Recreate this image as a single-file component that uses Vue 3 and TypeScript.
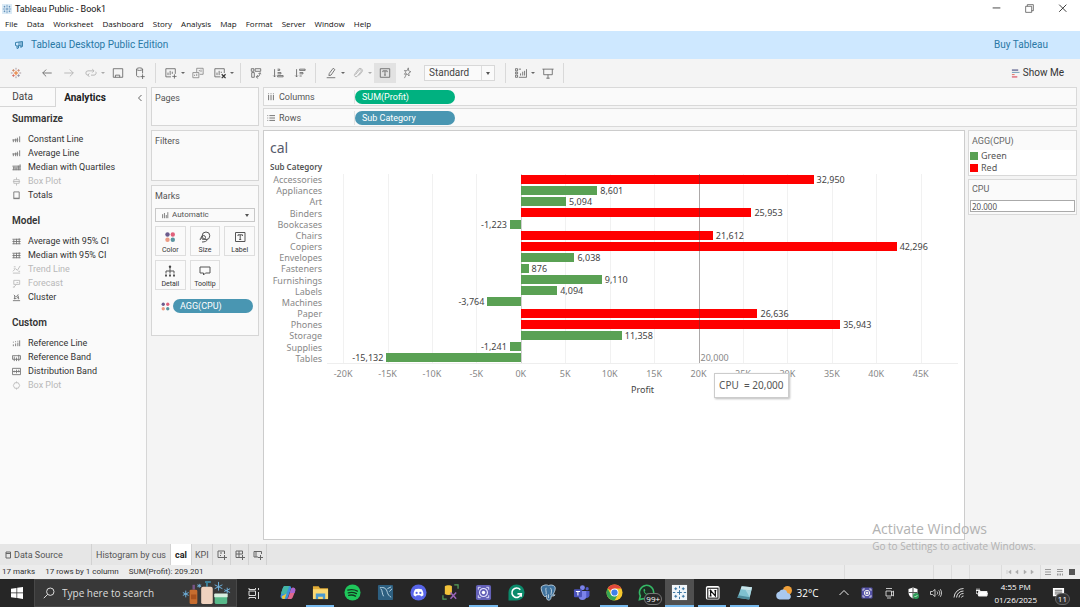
<script setup lang="ts">
import { ref } from 'vue'

interface AnalyticsItem { name: string; icon: string; off?: boolean }
interface AnalyticsGroup { title: string; items: AnalyticsItem[] }
interface Row { name: string; value: number; over?: boolean }

const menus = ['File', 'Data', 'Worksheet', 'Dashboard', 'Story', 'Analysis', 'Map', 'Format', 'Server', 'Window', 'Help']

const glyphs: Record<string, string> = {
  line: 'M1.5 8V5M4 8V4M6 8V3M8.5 8V1.5M0.5 5.5H7',
  quart: 'M0.5 3.5H9.5M0.5 7.5H9.5M2 8V4M4.5 8V5M7 8V3M9 8V1.5M1 5.5H9',
  box: 'M5 0.5V3M5 7V9.5M2 3H8V7H2ZM1 5H9',
  totals: 'M2 1H8V8H2ZM1.5 8.5H8.5',
  ci: 'M0.5 2.5H9.5M0.5 5H9.5M0.5 7.5H9.5M2 8V3M5 8V2M8 8V1.5',
  trend: 'M1 9H9M1 7L4 4L6 6L9 1M2 2H4M2 4H3M7 7H9',
  forecast: 'M2 1.5H8.5V6H2ZM2 9L5 6M5 4H7M1 9H3',
  cluster: 'M1 8.5H9M2 2L4 4M7 1.5L5 4L8 6M2 6H5M3 3V7M7 3V7',
  refline: 'M1.5 8V6M4 8V5M6.5 8V4M8.5 8V1.5M1 3.5H2M3.5 3H4.5M6 2.5H7',
  band: 'M0.5 3H9.5V7H0.5ZM2.5 9V4M5 9V5M7.5 9V2',
  dist: 'M0.5 1.5H9.5V8.5H0.5ZM2.5 6V4M5 7V3M7.5 6V3M1 5H9',
  plot: 'M3 2H7L8.5 5L7 8H3L1.5 5ZM5 0.5V2M5 8V9.5',
}

const groups: AnalyticsGroup[] = [
  { title: 'Summarize', items: [
    { name: 'Constant Line', icon: 'line' }, { name: 'Average Line', icon: 'line' },
    { name: 'Median with Quartiles', icon: 'quart' }, { name: 'Box Plot', icon: 'box', off: true },
    { name: 'Totals', icon: 'totals' } ] },
  { title: 'Model', items: [
    { name: 'Average with 95% CI', icon: 'ci' }, { name: 'Median with 95% CI', icon: 'ci' },
    { name: 'Trend Line', icon: 'trend', off: true }, { name: 'Forecast', icon: 'forecast', off: true },
    { name: 'Cluster', icon: 'cluster' } ] },
  { title: 'Custom', items: [
    { name: 'Reference Line', icon: 'refline' }, { name: 'Reference Band', icon: 'band' },
    { name: 'Distribution Band', icon: 'dist' }, { name: 'Box Plot', icon: 'plot', off: true } ] },
]

const rows: Row[] = [
  { name: 'Accessories', value: 32950, over: true },
  { name: 'Appliances', value: 8601 },
  { name: 'Art', value: 5094 },
  { name: 'Binders', value: 25953, over: true },
  { name: 'Bookcases', value: -1223 },
  { name: 'Chairs', value: 21612, over: true },
  { name: 'Copiers', value: 42296, over: true },
  { name: 'Envelopes', value: 6038 },
  { name: 'Fasteners', value: 876 },
  { name: 'Furnishings', value: 9110 },
  { name: 'Labels', value: 4094 },
  { name: 'Machines', value: -3764 },
  { name: 'Paper', value: 26636, over: true },
  { name: 'Phones', value: 35943, over: true },
  { name: 'Storage', value: 11358 },
  { name: 'Supplies', value: -1241 },
  { name: 'Tables', value: -15132 },
]

const axisMin = -21800
const axisMax = 49200
const ticks = Array.from({ length: 14 }, (_, i) => -20000 + i * 5000)
const at = (v: number) => `${((v - axisMin) / (axisMax - axisMin)) * 100}%`
const barWidth = (v: number) => `${(v < 0 ? v / axisMin : v / axisMax) * 100}%`
const fmt = (v: number) => v.toLocaleString('en-US')

const cpu = ref('20.000')
const fit = ref('Standard')
const mark = ref('Automatic')
const search = ref('')
</script>

<template>
  <div class="window">
    <header class="titlebar">
      <svg class="app-icon" viewBox="0 0 12 12"><rect width="12" height="12" fill="#dcebf6" /><path d="M6 1v3M6 8v3M1 6h3M8 6h3M4.5 6h3M6 4.5v3M3 2.2v2M2 3.2h2M9 2.2v2M8 3.2h2M3 7.8v2M2 8.8h2M9 7.8v2M8 8.8h2" stroke="#4f83b0" stroke-width="0.8" /></svg>
      <span>Tableau Public - Book1</span>
      <div class="win-buttons">
        <button aria-label="Minimize"><svg viewBox="0 0 10 10"><path d="M1.5 4.5h7" stroke="#333" fill="none" stroke-width=".8" /></svg></button>
        <button aria-label="Restore"><svg viewBox="0 0 10 10"><path d="M1.5 3h5.5v5.500h-5.500zM3 3V1.500h5.500V7H7" stroke="#555" fill="none" stroke-width=".7" /></svg></button>
        <button aria-label="Close"><svg viewBox="0 0 10 10"><path d="M2 1.500l6.500 6.500M8.500 1.500L2 8" stroke="#222" fill="none" stroke-width=".8" /></svg></button>
      </div>
    </header>

    <nav class="menubar">
      <button v-for="m in menus" :key="m">{{ m }}</button>
    </nav>

    <div class="banner">
      <svg class="horn" viewBox="0 0 10 10"><path d="M1.500 2.500L5 2v3.500L3.500 6l-2-.5zM3 6v2.500l1.500-.5V6M5 2l3.500-.5v5L5 5.500M7 2v6" fill="none" stroke="#2a78a5" stroke-width=".9" /></svg>
      <span>Tableau Desktop Public Edition</span>
      <a href="#">Buy Tableau</a>
    </div>

    <div class="toolbar">
      <button class="tool home" aria-label="Start page"><svg viewBox="0 0 14 14"><path d="M7 4.500v5M4.500 7h5" stroke="#e8762b" stroke-width="1.200" /><path d="M4 2.500v3M2.500 4h3" stroke="#c9805a" /><path d="M10 2.500v3M8.500 4h3" stroke="#c48a77" /><path d="M4 8.500v3M2.500 10h3" stroke="#d4655a" /><path d="M10 8.500v3M8.500 10h3" stroke="#8a8aa0" /><path d="M7 1v2M7 11v2M1 7h2M11 7h2" stroke="#9c8a95" /></svg></button>
      <button class="tool" aria-label="Undo"><svg viewBox="0 0 14 14"><path d="M12.500 7H2M6 3L2 7l4 4" /></svg></button>
      <button class="tool dim" aria-label="Redo"><svg viewBox="0 0 14 14"><path d="M1.500 7H12M8 3l4 4-4 4" /></svg></button>
      <button class="tool dim" aria-label="Replay"><svg viewBox="0 0 14 14"><path d="M10 4.500H3.500a2.500 2.500 0 0 0 0 5H4M7 9.500h3.500a2.500 2.500 0 0 0 2-4M8.500 2.500l2 2-2 2M5 7.500l-1.500 2L5 11.500" /></svg></button>
      <button class="caret dim" aria-label="Replay options"></button>
      <button class="tool" aria-label="Save"><svg viewBox="0 0 14 14"><path d="M1.500 2h11v10h-11zM4 12V9.500h5V12" /></svg></button>
      <button class="tool" aria-label="New data source"><svg viewBox="0 0 14 14"><ellipse cx="6.500" cy="2.500" rx="3.500" ry="1.500" /><path d="M3 2.500v7.500c0 1 1.500 1.500 3.500 1.500M10 2.500v5M10 8.500v5.500M7.500 11.200h5" /></svg></button>
      <i class="sep"></i>
      <button class="tool" aria-label="New worksheet"><svg viewBox="0 0 14 14"><path d="M7 11.500H1v-9.500h11V8M3.500 9.500V6.500M6 9.500V4.500M8.500 8V5.500M11 8.500v5M8.500 11h5" /></svg></button>
      <button class="caret" aria-label="New sheet options"></button>
      <button class="tool light" aria-label="Duplicate"><svg viewBox="0 0 14 14"><path d="M1 6.500h7v6H1zM5.500 6V1.500h7.500v7H9M3 10.500V9M5.500 10.500V8M8.500 5V3.500M10.500 6V3" /></svg></button>
      <button class="tool" aria-label="Clear sheet"><svg viewBox="0 0 14 14"><path d="M7.500 11.500H1v-9.500h11V7M3.500 9.500V6.500M6 9.500V4.500M8.500 7V5.500" /><path d="M9 8.500l4.500 4.500M13.500 8.500L9 13" stroke-width="1.400" stroke="#333" /></svg></button>
      <button class="caret" aria-label="Clear options"></button>
      <i class="sep"></i>
      <button class="tool" aria-label="Swap rows and columns"><svg viewBox="0 0 14 14"><path d="M1.500 2h3v3h-3zM6 2h6.500v3H6zM2 6.500V12h3V6.500zM11.500 7c0 3-1 4.500-4 4.500M9 9.500l-1.500 2L9 13.500M10 8l1.500-1.500L13 8" /></svg></button>
      <button class="tool" aria-label="Sort ascending"><svg viewBox="0 0 14 14"><path d="M3 2.500v9M1.500 10L3 11.500 4.500 10M6.500 2.500H9V4H6.500M6.500 6.500h4V8h-4M6.500 10h6.500v1.500H6.500z" /></svg></button>
      <button class="tool" aria-label="Sort descending"><svg viewBox="0 0 14 14"><path d="M3 2.500v9M1.500 10L3 11.500 4.500 10M6.500 2.500H13V4H6.500zM6.500 6.500h4V8h-4M6.500 10.500H9" /></svg></button>
      <i class="sep"></i>
      <button class="tool" aria-label="Highlight"><svg viewBox="0 0 14 14"><path d="M9.500 1.500L11.500 3 7 9.500l-2.500.5L5 7.500zM2 12.500h10" /></svg></button>
      <button class="caret" aria-label="Highlight options"></button>
      <button class="tool dim" aria-label="Group members"><svg viewBox="0 0 14 14"><path d="M4 9l4.500-5.500a1.300 1.300 0 0 1 2 1.800L6 11a2 2 0 0 1-3-2.500L7.500 2.500a2.500 2.500 0 0 1 4 3.500L8 10" /></svg></button>
      <button class="caret dim" aria-label="Group options"></button>
      <button class="tool active" aria-label="Show mark labels"><svg viewBox="0 0 14 14"><path d="M1.500 2h11v10h-11zM4.500 6V4.500h5V6M7 4.500v5M6 9.500h2" /></svg></button>
      <button class="tool" aria-label="Fix axes"><svg viewBox="0 0 14 14"><path d="M8.500 1L9 4.500l2.500 1L9 7l.5 3.500L7 8 4 8.500 5.500 6 4 4l3 .5zM6.500 8L4 13" stroke-width=".8" /></svg></button>
      <label class="fit">
        <select v-model="fit" aria-label="Fit"><option>Standard</option></select>
        <span class="fit-arrow"></span>
      </label>
      <i class="sep"></i>
      <button class="tool" aria-label="Show cards"><svg viewBox="0 0 14 14"><path d="M.5 2H3v2.500H.5zM.5 6H3v2H.5zM.5 9.500H3V12H.5zM4.500 2.500H7M4.500 12h9V2.500M6.500 10V7.500M9 10V5.500M11.200 10V4.500" /></svg></button>
      <button class="caret" aria-label="Card options"></button>
      <button class="tool" aria-label="Presentation mode"><svg viewBox="0 0 14 14"><path d="M.5 2.500h13M2 2.500V9h10V2.500M7 9v4.500M5 13h4" /></svg></button>
      <i class="sep"></i>
      <button class="showme">
        <svg viewBox="0 0 10 10"><path d="M1 1.200h7" stroke="#5b5f8d" stroke-width="1.400" /><path d="M1 3.800h8.500" stroke="#7fa7bd" stroke-width="1.200" /><path d="M1 6.200h3" stroke="#e07b6d" stroke-width="1.200" /><path d="M1 8.800h6" stroke="#dd5a6b" stroke-width="1.400" /></svg>
        Show Me
      </button>
    </div>

    <main class="workspace">
      <aside class="analytics">
        <div class="side-tabs">
          <button class="side-tab">Data</button>
          <button class="side-tab on">Analytics</button>
          <button class="fold" aria-label="Collapse pane"><svg viewBox="0 0 6 8"><path d="M4.500 1L1.500 4l3 3" fill="none" stroke="#555" stroke-width=".9" /></svg></button>
        </div>
        <div class="groups">
          <section v-for="g in groups" :key="g.title">
            <h2>{{ g.title }}</h2>
            <ul>
              <li v-for="it in g.items" :key="it.name" :class="{ off: it.off }">
                <svg viewBox="0 0 10 10"><path :d="glyphs[it.icon]" /></svg>{{ it.name }}
              </li>
            </ul>
          </section>
        </div>
      </aside>

      <aside class="cards">
        <section class="card pages"><h3>Pages</h3></section>
        <section class="card filters"><h3>Filters</h3></section>
        <section class="card marks">
          <h3>Marks</h3>
          <label class="mark-type">
            <svg viewBox="0 0 8 10"><path d="M1 9V4M3.300 9V2.500M5.600 9V5M7.500 9V1.500" stroke="#555" stroke-width=".9" /></svg>
            <select v-model="mark" aria-label="Mark type"><option>Automatic</option></select>
            <span class="tri"></span>
          </label>
          <div class="mark-grid">
            <button><svg viewBox="0 0 12 12"><circle cx="3.500" cy="3.500" r="2.200" fill="#6b5b8c" stroke="none" /><circle cx="8.800" cy="3.500" r="2.200" fill="#e0607a" stroke="none" /><circle cx="3.500" cy="8.800" r="2.200" fill="#ec9a83" stroke="none" /><circle cx="8.800" cy="8.800" r="2.200" fill="#5a94a0" stroke="none" /></svg>Color</button>
            <button><svg viewBox="0 0 12 12"><circle cx="7" cy="4.800" r="3.800" /><circle cx="4.500" cy="6.500" r="2" /><path d="M1.200 9c0-2 1-3.500 3-4M3 11c3 0 5-1 5.500-2.500" /></svg>Size</button>
            <button><svg viewBox="0 0 12 12"><path d="M1.500 1.500h9.500v9H1.500zM4 5V3.800h4.500V5M6.200 3.800v4.700M5.200 8.500h2" /></svg>Label</button>
            <button><svg viewBox="0 0 12 12"><circle cx="6" cy="1.800" r="1.200" fill="#444" stroke="none" /><path d="M6 2v4M2 8.500V6h8v2.500M6 6v2.500" /><path d="M1 10.500h2M5 10.500h2M9 10.500h2" stroke-width="2" /></svg>Detail</button>
            <button><svg viewBox="0 0 12 12"><path d="M1 2h10v6H6.500L4.500 10V8H1z" /></svg>Tooltip</button>
          </div>
          <div class="mark-pill">
            <svg viewBox="0 0 12 12"><circle cx="3" cy="3" r="2.200" fill="#6b5b8c" /><circle cx="9" cy="3" r="2.200" fill="#e0607a" /><circle cx="3" cy="9" r="2.200" fill="#ec9a83" /><circle cx="9" cy="9" r="2.200" fill="#5a94a0" /></svg>
            <span class="pill blue">AGG(CPU)</span>
          </div>
        </section>
      </aside>

      <section class="view">
        <div class="shelf">
          <span class="shelf-name"><svg viewBox="0 0 10 10"><path d="M2 2.500V9M5 2.500V9M8 2.500V9M2 0.500V1.500M5 0.500V1.500M8 0.500V1.500" /></svg>Columns</span>
          <span class="pill green">SUM(Profit)</span>
        </div>
        <div class="shelf">
          <span class="shelf-name"><svg viewBox="0 0 10 10"><path d="M3 2H10M3 5H10M3 8H10M0.500 2H1.500M0.500 5H1.500M0.500 8H1.500" /></svg>Rows</span>
          <span class="pill blue">Sub Category</span>
        </div>
        <div class="stage">
          <article class="canvas">
            <h1>cal</h1>
            <div class="chart">
              <div class="names">
                <b>Sub Category</b>
                <div class="name-list"><span v-for="r in rows" :key="r.name">{{ r.name }}</span></div>
              </div>
              <div class="plot-col">
                <div class="plot">
                  <i v-for="t in ticks" :key="t" class="grid" :class="{ zero: t === 0 }" :style="{ left: at(t) }"></i>
                  <div v-for="r in rows" :key="r.name" class="row">
                    <div class="half neg" :style="{ width: at(0) }">
                      <template v-if="r.value < 0"><span>{{ fmt(r.value) }}</span><i class="bar" :style="{ width: barWidth(r.value) }"></i></template>
                    </div>
                    <div class="half">
                      <template v-if="r.value > 0"><i class="bar" :class="{ over: r.over }" :style="{ width: barWidth(r.value) }"></i><span>{{ fmt(r.value) }}</span></template>
                    </div>
                  </div>
                  <div class="ref" :style="{ left: at(20000) }"><span>20,000</span></div>
                </div>
                <div class="axis">
                  <span v-for="t in ticks" :key="t" :style="{ left: at(t) }">{{ t / 1000 }}K</span>
                  <div class="tip" :style="{ left: at(21750) }">CPU&nbsp; = 20,000</div>
                </div>
                <div class="axis-title">Profit</div>
              </div>
            </div>
          </article>
          <aside class="legends">
            <section class="legend">
              <h3>AGG(CPU)</h3>
              <ul><li><i class="swatch"></i>Green</li><li><i class="swatch red"></i>Red</li></ul>
            </section>
            <section class="param">
              <label for="cpu">CPU</label>
              <input id="cpu" v-model="cpu" type="text" />
            </section>
          </aside>
        </div>
      </section>
    </main>

    <nav class="sheets">
      <button class="source"><svg viewBox="0 0 8 8"><path d="M2 1h4.500v6H2zM2 2.500h4" /></svg>Data Source</button>
      <button class="hist">Histogram by cus</button>
      <button class="on">cal</button>
      <button class="kpi">KPI</button>
      <button class="add" aria-label="New worksheet"><svg viewBox="0 0 10 10"><path d="M5 7.500H1v-6.500h6.500V4M3 3h2M7.500 5v5M5 7.500h5M3 5.500h1" /></svg></button>
      <button class="add" aria-label="New dashboard"><svg viewBox="0 0 10 10"><path d="M5 7.500H1v-6.500h6.500V4M4 1v6M1 4h6.500M7.500 5v5M5 7.500h5" /></svg></button>
      <button class="add" aria-label="New story"><svg viewBox="0 0 10 10"><path d="M5 7H1V1.500h7.500V4M3 1.500V7M7.500 5v5M5 7.500h5" /></svg></button>
    </nav>

    <footer class="status">
      <span>17 marks</span><span>17 rows by 1 column</span><span>SUM(Profit): 209.201</span>
      <div class="status-cells"><i></i><i></i><i></i><i></i></div>
      <div class="pager"><svg viewBox="0 0 36 8"><path d="M5 2v4M9 2L6.500 4 9 6zM16 2l-2.500 2 2.500 2zM22 2l2.500 2L22 6zM29 2l2.500 2L29 6z" fill="#aaa" stroke="#aaa" stroke-width=".4" /></svg></div>
      <div class="viewmodes"><svg viewBox="0 0 34 8"><path d="M3 1.500h6M3 4h6M3 6.500h6M15 1.500h6M15 3.500h6" stroke="#999" stroke-width="1" /><path d="M15 6.500h1.500M17.500 6.500H19M20 6.500h1" stroke="#999" stroke-width="2" /><path d="M27 1h6v6h-6z" fill="#555" /></svg></div>
    </footer>

    <footer class="taskbar">
      <button class="start" aria-label="Start"><svg viewBox="0 0 12 12"><path d="M0 1.700l5.500-.8v4.700H0zM6.200.8L12 0v5.600H6.200zM0 6.300h5.500V11L0 10.200zM6.200 6.300H12V12l-5.800-.9z" fill="#fff" /></svg></button>
      <label class="search">
        <svg class="lens" viewBox="0 0 12 12"><circle cx="7.300" cy="4.700" r="3.700" /><path d="M4.700 7.300L.8 11.200" /></svg>
        <input v-model="search" type="text" placeholder="Type here to search" aria-label="Search" />
        <svg class="promo" viewBox="0 0 52 28">
          <path d="M2 13l6 3M5 11v7M2 16l6-3M17 5l4 2M19 4v4M17 7l4-2M35 5l8 4M39 2v9M35 9l8-4M48 8v6M45 10l6 3M45 12l6-3" stroke="#6fb1dd" stroke-width="1" />
          <path d="M12 5h2.500v5H12z" fill="#7a5588" /><rect x="9" y="10" width="8" height="15" rx="1.500" fill="#c76d2f" /><path d="M10.500 15h5.500v5h-5.500z" fill="#a9511d" />
          <path d="M25 1h6v2h-3v4h-2V3h-1z" fill="#3c7e96" /><rect x="21" y="7" width="12" height="18" rx="2" fill="#efd2bf" />
          <rect x="35" y="15" width="13" height="10" rx="2" fill="#58b98a" /><rect x="34.500" y="14" width="14" height="4" rx="1" fill="#d8eee0" />
        </svg>
      </label>
      <button class="timeline" aria-label="Task view"><svg viewBox="0 0 12 12"><path d="M1 1v1.500h6.500V1M1 4h6.500v4.500H1zM1 12v-1.500h6.500V12M10.500 5V12M10.500 1v2" fill="none" stroke="#ddd" /></svg></button>
      <div class="apps">
        <button aria-label="Copilot"><svg viewBox="0 0 18 18"><path d="M6 2h5c2 0 2 2 1.500 3.500L9.500 14c-.5 1.500-1.500 2-3 2H5c-3 0-4-2.500-3-5l2-6.500C4.500 3 5 2 6 2z" fill="#3a8fdd" /><path d="M2 10l2-5.500C4.500 3 5 2 6 2h5L7.500 11z" fill="#44b6a5" /><path d="M3 13l5-3-2 6H5c-1.500 0-2-1-2-3z" fill="#e9c63e" /><path d="M12 16H7c2 0 2.500-1 3-2.500L12.500 6c.5-1.500 1.200-2 2.500-2 2.500 0 2.500 2.500 2 4l-2 5c-.6 2-1.500 3-3 3z" fill="#e0688d" /><path d="M12.500 6c.5-1.500 1.200-2 2.500-2 2.500 0 2.500 2.500 2 4l-.5 1.500H11.500z" fill="#a765d0" /></svg></button>
        <button class="run" aria-label="File Explorer"><svg viewBox="0 0 18 18"><path d="M1 2.500h6l1.500 2H17V15H1z" fill="#e2ac36" /><path d="M1 5.500h16V16H1z" fill="#fbd872" /><path d="M4 10h10v6h-2.500v-2.500h-5V16H4z" fill="#4b9ad0" /></svg></button>
        <button aria-label="Spotify"><svg viewBox="0 0 18 18"><circle cx="9" cy="9" r="8.500" fill="#1fc75b" /><path d="M4 6.500c3.500-1 7-.7 10.200 1M4.500 9.300c3-.8 6-.5 8.700.9M5 12c2.500-.7 5-.4 7.200.8" stroke="#12381f" stroke-width="1.400" fill="none" stroke-linecap="round" /></svg></button>
        <button aria-label="MySQL Workbench"><svg viewBox="0 0 18 18"><rect x="1" y="1" width="16" height="16" rx="1" fill="#2d5f80" /><path d="M3 4c5-1 7 1 8 5 .5 2 2 4 4 5M4 5c2 2 1 5 3 8M11 5l4-2M13 8l3-3" stroke="#bcd7e6" fill="none" /></svg></button>
        <button aria-label="Discord"><svg viewBox="0 0 18 18"><circle cx="9" cy="9" r="8.500" fill="#5865e8" /><path d="M5.500 5.500c2-.8 5-.8 7 0 1.300 2 2 4.500 1.700 6.500-1 .8-1.700 1-2.500 1.200l-.8-1.200H7.100l-.8 1.200c-.8-.2-1.500-.4-2.500-1.200-.3-2 .4-4.500 1.700-6.500z" fill="#fff" /><circle cx="7" cy="9.500" r="1.200" fill="#5865e8" /><circle cx="11" cy="9.500" r="1.200" fill="#5865e8" /></svg></button>
        <button aria-label="Database tool"><svg viewBox="0 0 18 18"><path d="M3 2.500c2-1.500 6-1.500 7.500 0v8c-2 1.500-5.500 1.500-7.500 0z" fill="#f4c33a" /><path d="M13 1h4v4M1 12v4h4" stroke="#57a15b" stroke-width="1.300" fill="none" /><path d="M9 9l6 6.500M15 9l-6 6.500" stroke="#9a63b8" stroke-width="1.600" /></svg></button>
        <button class="run" aria-label="Screen recorder"><svg viewBox="0 0 18 18"><rect x="1" y="1" width="16" height="16" rx="2" fill="#6461b8" /><circle cx="9" cy="9" r="4.200" fill="none" stroke="#e6e4ff" stroke-width="1.200" /><circle cx="9" cy="9" r="1.800" fill="#fff" /><path d="M3.500 6V3.500H6M12 3.500h2.500V6M14.500 12v2.500H12M6 14.500H3.500V12" fill="none" stroke="#e6e4ff" /></svg></button>
        <button aria-label="Grammarly"><svg viewBox="0 0 18 18"><path d="M9 .5a8.500 8.500 0 1 1 0 17H.5V9A8.500 8.500 0 0 1 9 .5z" fill="#0b8a6b" /><path d="M13 6a5 5 0 1 0 1 4.500H10M14 10.500v3" fill="none" stroke="#fff" stroke-width="1.700" /></svg></button>
        <button aria-label="PostgreSQL"><svg viewBox="0 0 18 18"><path d="M4 1.500c2-1 4-.5 5 .2 2-1 5-.8 6.500.8 1.500 2 0 6-2 9 1 .2 2 .2 2.500 0-.8 1.200-2.500 1.500-4 1-.3 2-.5 4-2 4.500-2 .5-2.800-.5-3-2.500V12c-1 2-2.500 1.500-3.200.2C2.500 10 .5 5 1.500 3c.5-.9 1.300-1.300 2.500-1.500z" fill="#3f729d" stroke="#c9dcea" stroke-width=".9" /><path d="M6.500 4c-1 2 .5 4 0 7M11 4c2 2 1 5 .5 7.500M9 11v4" stroke="#dce8f1" fill="none" stroke-width=".8" /></svg></button>
        <button aria-label="Teams"><svg viewBox="0 0 18 18"><circle cx="10" cy="4" r="2.600" fill="#7b83eb" /><circle cx="15" cy="5" r="1.700" fill="#5059c9" /><path d="M12 7.500h5.500V12a3 3 0 0 1-4 2.500z" fill="#5059c9" /><path d="M6 7.500h8V13a4 4 0 0 1-8 0z" fill="#7b83eb" /><rect x="1" y="5.500" width="8.500" height="8.500" rx="1" fill="#4b53bc" /><path d="M3 8h4.500M5.200 8v4.200" stroke="#fff" stroke-width="1.100" /></svg></button>
        <button class="run" aria-label="Chrome"><svg viewBox="0 0 18 18"><circle cx="9" cy="9" r="8.500" fill="#f7c92d" /><path d="M9 9L1.640 4.750A8.500 8.500 0 0 1 16.360 4.750H9z" fill="#e0473b" /><path d="M1.640 4.750A8.500 8.500 0 0 0 9 17.500l3.700-6.400L9 9 5.300 11z" fill="#35a553" /><circle cx="9" cy="9" r="4.200" fill="#fff" /><circle cx="9" cy="9" r="3.300" fill="#3f7fe8" /></svg></button>
        <button aria-label="WhatsApp"><svg viewBox="0 0 18 18"><path d="M1.500 16.500l1-4A7.500 7.500 0 1 1 5.500 15.500z" fill="#1d2d23" stroke="#35b765" stroke-width="1.700" /><path d="M6 5.500c-1 3 2.500 7 6 6.500l.5-1.500-2-1-1 1C8 9.800 7.200 9 7 8l.8-1L7 5z" fill="#35b765" /></svg><em>99+</em></button>
        <button class="run current" aria-label="Tableau"><svg viewBox="0 0 18 18"><rect x="1" y="1" width="16" height="16" fill="#f1f6fa" /><path d="M9 6.500v5M6.500 9h5M5 3.500v3M3.500 5h3M13 3.500v3M11.500 5h3M5 11.500v3M3.500 13h3M13 11.500v3M11.500 13h3M9 2v2.500M9 13.500V16M2 9h2.500M13.500 9H16" stroke="#33719f" /></svg></button>
        <button class="run" aria-label="Notion"><svg viewBox="0 0 18 18"><rect x="2" y="2" width="14.500" height="14.500" rx="2" fill="#fff" /><rect x="4" y="4.500" width="10.800" height="10.500" fill="#fff" stroke="#222" stroke-width="1.200" /><path d="M7 12.500V7l5 5.500V7M6 7h2M11 7h2M6 12.500h2" stroke="#111" stroke-width="1.300" fill="none" /></svg></button>
        <button class="run" aria-label="Notepad"><svg viewBox="0 0 18 18"><path d="M6 2.500l11 1-3 13-12.500-2z" fill="#7fc1cf" /><path d="M6 2.500l11 1-.8 3.500L5 5.500z" fill="#c9e4ea" /><path d="M1.500 14.500l1-2.500 12 2-.5 2.500z" fill="#4e8b9b" /><path d="M10 6l6.200 1L14.500 14z" fill="#a9d6df" /></svg></button>
      </div>
      <div class="weather"><svg viewBox="0 0 18 16"><circle cx="12.500" cy="5.500" r="4.500" fill="#f0a03a" /><path d="M4.500 14.500a4 4 0 0 1-.3-7.800A4.500 4.500 0 0 1 12.500 8a3.400 3.400 0 0 1 1.300 6.500z" fill="#a9c8ee" /></svg>32°C</div>
      <div class="tray">
        <svg viewBox="0 0 12 12"><path d="M1.500 8L6 3.500 10.500 8" /></svg>
        <svg viewBox="0 0 12 12"><rect x=".5" y=".5" width="11" height="11" rx="1" fill="#5552a8" stroke="none" /><circle cx="6" cy="6" r="2.700" /><circle cx="6" cy="6" r="1" fill="#fff" /><path d="M2 4V2h2M8 2h2v2M10 8v2H8M4 10H2V8" stroke-width=".7" /></svg>
        <svg viewBox="0 0 12 12"><path d="M2 4h5.500v5H2zM7.500 5.500L9.500 4v5L7.500 7.500M2 1.500h6M3 11h4" stroke-width=".8" /></svg>
        <svg viewBox="0 0 12 12"><path d="M6 .5l4.500 1.500v3.500c0 3-2 5-4.500 6-2.500-1-4.500-3-4.500-6V2z" fill="#fff" stroke="none" /><path d="M6 1v10M1.500 5.500h9" stroke="#555" /><circle cx="9" cy="9" r="3" fill="#2e9b57" stroke="none" /><path d="M7.500 9l1 1 2-2" stroke-width=".8" /></svg>
        <svg viewBox="0 0 12 12"><path d="M.5 4.500h2L5 2.500v7L2.500 7.500h-2zM7 4.500c.8 1 .8 2 0 3M8.700 3.300c1.500 2 1.500 3.500 0 5.400M10.300 2.200c1.700 2.500 1.700 5 0 7.600" stroke-width=".8" /></svg>
        <svg viewBox="0 0 12 12"><path d="M1 10.500A9.500 9.500 0 0 1 10.500 1.500M3.500 10.500a7 7 0 0 1 7-6.500M6 10.500a4.500 4.500 0 0 1 4.500-4M8.500 10.500a2 2 0 0 1 2-1.500" stroke-width=".9" /></svg>
        <svg viewBox="0 0 12 12"><path d="M2.500 4.500H11v4.500H2.500z" fill="#fff" /><path d="M1 1.500v2M3 1.500v2M0 3.500h4V5a2 2 0 0 1-4 0zM11.700 6v1.500" /></svg>
      </div>
      <div class="clock"><span>4:55 PM</span><span>01/26/2025</span></div>
      <button class="notes" aria-label="Notifications"><svg viewBox="0 0 14 14"><path d="M1 1h12v9H8l-3 3v-3H1z" fill="#fff" /><path d="M3 3.500h8M3 5.500h8M3 7.500h5" stroke="#333" stroke-width=".8" /></svg><em>11</em></button>
    </footer>

    <div class="watermark"><strong>Activate Windows</strong><span>Go to Settings to activate Windows.</span></div>
  </div>
</template>

<style>
body { margin: 0; }
</style>

<style scoped>
* { box-sizing: border-box; }
.window {
  position: relative; display: flex; flex-direction: column; min-height: 100vh;
  background: #f4f4f4; color: #333; overflow: hidden;
  font: 9px/14px "Roboto", "Liberation Sans", sans-serif;
}
button { border: 0; padding: 0; margin: 0; background: none; font: inherit; color: inherit; }
h1, h2, h3, ul { margin: 0; padding: 0; font-size: inherit; font-weight: 400; list-style: none; }
svg { display: block; flex: none; }
i, em { font-style: normal; }

.titlebar { display: flex; align-items: center; height: 17px; padding-left: 2px; gap: 3px; background: #fff; color: #111; }
.app-icon { width: 10px; height: 10px; }
.win-buttons { display: flex; margin-left: auto; padding-right: 1px; }
.win-buttons button { display: grid; place-items: center; width: 33px; height: 16px; }
.win-buttons svg { width: 11px; height: 11px; }

.menubar { display: flex; gap: 9px; height: 14px; padding-left: 5px; background: #fff; color: #111; font: 8px/14px "Open Sans", sans-serif; }

.banner { display: flex; align-items: center; gap: 7px; height: 28px; padding: 0 32px 0 14px; background: #cee8ff; color: #2a78a5; font-size: 10px; }
.banner a { margin-left: auto; color: inherit; text-decoration: none; }
.horn { width: 10px; height: 10px; }

.toolbar { display: flex; align-items: center; height: 28px; padding: 0 16px 0 5px; }
.tool { display: grid; place-items: center; width: 22px; height: 20px; }
.tool.home { margin-right: 9px; }
.tool svg { width: 12px; height: 12px; fill: none; stroke: #666; stroke-width: 1; }
.tool.dim svg { stroke: #b0b0b0; }
.tool.light svg { stroke: #888; }
.tool.active { background: #e2e2e2; }
.caret { width: 5px; height: 20px; display: grid; place-items: center; }
.caret::after { content: ""; margin-left: -3px; border: 2px solid transparent; border-top-color: #666; border-bottom: 0; }
.caret.dim::after { border-top-color: #aaa; }
.sep { width: 1px; height: 20px; margin: 0 4px; background: #d9d9d9; }
.fit { display: flex; align-items: center; width: 71px; height: 16px; margin: 0 6px; border: 1px solid #d8d8d8; background: #fafafa; }
.fit select { flex: 1; min-width: 0; height: 14px; padding: 0 0 0 4px; border: 0; background: none; appearance: none; font: inherit; font-size: 10px; color: #444; }
.fit-arrow { display: grid; place-items: center; width: 13px; height: 14px; border-left: 1px solid #ddd; }
.fit-arrow::after, .tri::after { content: ""; display: block; border: 2px solid transparent; border-top: 3px solid #555; border-bottom: 0; }
.showme { display: flex; align-items: center; gap: 3px; margin-left: auto; font-size: 10px; }
.showme svg { width: 9px; height: 9px; }

.workspace { flex: 1; display: flex; gap: 4px; padding-right: 3px; }
.analytics { width: 147px; flex: none; background: #fafafa; border: 1px solid #d6d6d6; border-width: 1px 1px 0 0; }
.side-tabs { display: flex; height: 19px; font-size: 10px; }
.side-tab { width: 56px; padding-right: 10px; border: 1px solid #d6d6d6; border-width: 0 1px 1px 0; color: #444; }
.side-tab.on { border: 0; width: 58px; padding: 0; font-weight: 700; color: #222; }
.fold { margin-left: auto; padding-right: 3px; }
.fold svg { width: 6px; height: 8px; }
.groups { display: flex; flex-direction: column; gap: 12px; padding: 5px 0 0 12px; }
.groups h2 { margin-bottom: 6px; font-size: 10px; line-height: 14px; font-weight: 600; }
.groups li { display: flex; align-items: center; gap: 7px; }
.groups li svg { width: 9px; height: 9px; fill: none; stroke: #777; stroke-width: 1; }
.groups li.off { color: #b8b8b8; }
.groups li.off svg { stroke: #bbb; }

.cards { display: flex; flex-direction: column; gap: 4px; width: 108px; flex: none; }
.card { padding: 3px; background: #fafafa; border: 1px solid #d6d6d6; }
.card h3 { color: #555; line-height: 14px; }
.pages { height: 39px; }
.filters { height: 51px; }
.marks { height: 151px; }
.mark-type { display: flex; align-items: center; gap: 3px; height: 14px; margin-top: 5px; padding: 0 5px; border: 1px solid #c8c8c8; }
.mark-type svg { width: 8px; height: 8px; }
.mark-type select { flex: 1; min-width: 0; height: 12px; padding: 0; border: 0; background: none; appearance: none; font: 8px/12px "Roboto", sans-serif; color: #555; }
.mark-grid { display: grid; grid-template-columns: repeat(3, 1fr); gap: 4px; margin-top: 4px; }
.mark-grid button { display: flex; flex-direction: column; align-items: center; justify-content: flex-end; gap: 2px; height: 30px; padding-bottom: 0; border: 1px solid #dedede; font-size: 7px; line-height: 10px; }
.mark-grid svg { width: 12px; height: 12px; fill: none; stroke: #555; }
.mark-pill { display: flex; align-items: center; gap: 3px; margin: 9px 2px 0 6px; }
.mark-pill svg { width: 9px; height: 9px; }
.mark-pill .pill { flex: 1; }
.pill { height: 14px; padding-left: 7px; border-radius: 7px; color: #fff; line-height: 14px; }
.pill.blue { background: #4996b2; }
.pill.green { background: #00b180; }

.view { flex: 1; min-width: 0; display: flex; flex-direction: column; padding-bottom: 4px; }
.shelf { display: flex; align-items: center; height: 19px; margin-bottom: 2px; background: #fafafa; border: 1px solid #d9d9d9; }
.shelf-name { display: flex; align-items: center; gap: 4px; width: 91px; padding-left: 3px; border-right: 1px solid #e4e4e4; color: #555; }
.shelf-name svg { width: 8px; height: 8px; fill: none; stroke: #555; }
.shelf .pill { width: 100px; }
.stage { flex: 1; display: flex; gap: 3px; margin-top: 1px; }
.canvas { flex: 1; min-width: 0; padding: 7px 6px 0; background: #fff; border: 1px solid #ccc; }
.canvas h1 { color: #565a6c; font: 14px/20px "Noto Sans", sans-serif; }
.chart { display: flex; gap: 5px; margin-top: 3px; font: 9px/11px "Noto Sans", sans-serif; }
.names { display: flex; flex-direction: column; text-align: right; }
.names b { margin-bottom: 1px; font-weight: 600; font-size: 8px; line-height: 12px; color: #555; }
.name-list { display: flex; flex-direction: column; height: 190px; color: #888; }
.name-list span { flex: 1; }
.plot-col { flex: 1; min-width: 0; padding-top: 13px; }
.plot { position: relative; display: flex; flex-direction: column; height: 190px; border-bottom: 1px solid #eee; }
.grid { position: absolute; top: 0; bottom: 0; width: 1px; background: #f1f1f1; }
.grid.zero { background: #d0d0d0; }
.row { position: relative; flex: 1; display: flex; align-items: center; color: #444; }
.half { flex: 1; display: flex; align-items: center; gap: 3px; }
.half.neg { flex: none; justify-content: flex-end; }
.bar { flex: none; height: 9px; background: #5aa154; }
.bar.over { background: #f00; }
.ref { position: absolute; top: 0; bottom: 0; display: flex; align-items: flex-end; padding-left: 1px; border-left: 1px solid rgba(70, 60, 60, .4); color: #888; }
.axis { position: relative; height: 19px; color: #888; }
.axis > span { position: absolute; top: 4px; transform: translateX(-50%); }
.tip { position: absolute; top: 9px; padding: 5px 4px; background: #fff; border: 1px solid #ccc; box-shadow: 1px 1px 2px #bbb; color: #555; font-size: 10px; line-height: 13px; white-space: nowrap; }
.axis-title { text-align: center; line-height: 14px; color: #444; }

.legends { display: flex; flex-direction: column; gap: 3px; width: 109px; }
.legend { border: 1px solid #d9d9d9; background: #fff; padding-bottom: 1px; }
.legend h3 { height: 19px; padding: 3px 3px; background: #fafafa; color: #666; }
.legend li { display: flex; align-items: center; gap: 3px; padding-left: 1px; line-height: 12px; color: #555; font-family: "Noto Sans", sans-serif; }
.swatch { width: 8px; height: 8px; background: #5aa154; }
.swatch.red { background: #f00; }
.param { display: flex; flex-direction: column; padding: 2px 1px; background: #fafafa; border: 1px solid #d9d9d9; color: #666; }
.param label { padding-left: 2px; line-height: 14px; margin-bottom: 4px; }
.param input { width: 100%; height: 12px; padding: 0 1px; border: 1px solid #aaa; background: #fff; font: 8px/10px "Noto Sans", sans-serif; color: #555; }

.sheets { display: flex; height: 21px; background: #e6e6e6; color: #555; }
.sheets button { padding: 0 4px; border-right: 1px solid #d2d2d2; }
.sheets .source { display: flex; align-items: center; gap: 2px; width: 92px; }
.sheets svg { width: 8px; height: 8px; fill: none; stroke: #666; }
.sheets .hist { width: 79px; white-space: nowrap; }
.sheets .on { background: #fff; color: #222; font-weight: 700; }
.sheets .kpi { padding: 0 3px; }
.sheets .add { display: grid; place-items: center; width: 18px; }
.sheets .add svg { width: 10px; height: 10px; }

.status { display: flex; align-items: center; gap: 10px; height: 14px; padding-left: 2px; background: #ececec; color: #333; font-size: 8px; }
.status-cells { display: flex; align-self: stretch; margin: 0 -10px 0 auto; }
.status-cells i { width: 18px; border-left: 1px solid #dcdcdc; }
.status-cells i:first-child { width: 89px; }
.status-cells i:last-child { width: 32px; }
.pager { width: 40px; align-self: stretch; display: flex; align-items: center; border: 1px solid #dcdcdc; border-width: 0 1px; }
.pager svg { width: 36px; height: 8px; }
.viewmodes { margin: 0 4px 0 -9px; }
.viewmodes svg { width: 34px; height: 8px; }

.taskbar { display: flex; align-items: stretch; height: 28px; background: #262626; color: #fff; font: 10px/14px "Open Sans", sans-serif; }
.start { display: grid; place-items: center; width: 34px; }
.start svg { width: 12px; height: 12px; }
.search { display: flex; align-items: center; gap: 7px; width: 203px; padding-left: 8px; background: #383838; border: 1px solid #484848; }
.lens { width: 12px; height: 12px; fill: none; stroke: #ddd; }
.search input { flex: 1; min-width: 0; padding: 0; border: 0; background: none; font: inherit; color: #ddd; }
.search input::placeholder { color: #ddd; opacity: 1; }
.promo { width: 52px; height: 27px; margin-right: 4px; fill: none; }
.timeline { display: grid; place-items: center; width: 34px; }
.timeline svg { width: 12px; height: 12px; }
.apps { display: flex; width: 486px; margin-left: 2px; gap: 4px; }
.apps button { position: relative; flex: 1; display: grid; place-items: center; border-bottom: 2px solid transparent; }
.apps svg { width: 17px; height: 17px; }
.apps .run { border-bottom-color: #76b9ed; }
.apps .current { background: #505050; }
.apps em { position: absolute; right: -1px; bottom: 0; padding: 0 1px; border: 1px solid #777; border-radius: 6px; background: #262626; font-size: 8px; line-height: 10px; }
.weather { display: flex; align-items: center; gap: 4px; margin-left: auto; }
.weather svg { width: 18px; height: 16px; }
.tray { display: flex; align-items: center; gap: 11px; margin: 0 7px 0 19px; }
.tray svg { width: 12px; height: 12px; fill: none; stroke: #eee; stroke-width: 1; }
.clock { display: flex; flex-direction: column; justify-content: center; align-items: center; font-size: 8px; line-height: 13px; }
.notes { position: relative; width: 43px; display: grid; place-items: center; }
.notes svg { width: 13px; height: 13px; }
.notes em { position: absolute; right: 10px; bottom: 2px; padding: 0 2px; border: 1px solid #666; border-radius: 6px; background: #333; font-size: 8px; line-height: 10px; }

.watermark { position: absolute; right: 44px; bottom: 54px; display: flex; flex-direction: column; color: #b2b2b2; font: 10px/14px "Open Sans", sans-serif; pointer-events: none; }
.watermark strong { font-weight: 400; font-size: 14px; line-height: 20px; }
</style>
